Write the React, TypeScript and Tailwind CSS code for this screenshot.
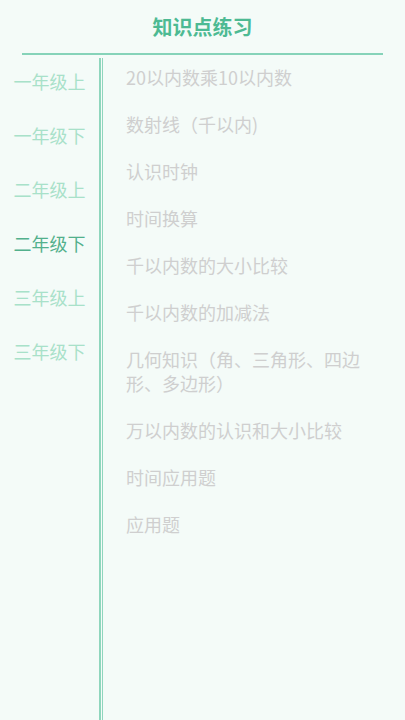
import React from "react";

const grades = ["一年级上", "一年级下", "二年级上", "二年级下", "三年级上", "三年级下"];
const topics = [
  "20以内数乘10以内数",
  "数射线（千以内)",
  "认识时钟",
  "时间换算",
  "千以内数的大小比较",
  "千以内数的加减法",
  "几何知识（角、三角形、四边形、多边形）",
  "万以内数的认识和大小比较",
  "时间应用题",
  "应用题",
];

export default function App() {
  const selected = 3;
  return (
    <div
      className="w-[405px] h-[720px] bg-[#f4fbf8] flex flex-col overflow-hidden"
      style={{ fontFamily: '"Noto Sans CJK SC", "Noto Sans", sans-serif' }}
    >
      <div className="h-[53px] flex items-center justify-center text-[20px] font-bold text-[#4dba93] leading-none">
        知识点练习
      </div>
      <div className="mx-[22px] h-[1.5px] bg-[#86d3b9]" />
      <div className="flex flex-1 mt-[3px]">
        <div className="w-[99px] pt-[11px] flex flex-col items-center gap-[30px]">
          {grades.map((g, i) => (
            <div
              key={g}
              className={
                "text-[18px] leading-[24px] " +
                (i === selected ? "text-[#52b08c]" : "text-[#a8e1c9]")
              }
            >
              {g}
            </div>
          ))}
        </div>
        <div className="w-[2px] bg-[#8fd6bd]" />
        <div className="w-[1px]" />
        <div className="w-[1px] bg-[#8fd6bd]" />
        <div className="flex-1 pl-[23px] pr-[28px] pt-[7px] flex flex-col gap-[23px]">
          {topics.map((t) => (
            <div key={t} className="text-[18px] leading-[24px] text-[#cfcfcf]">
              {t}
            </div>
          ))}
        </div>
      </div>
    </div>
  );
}
